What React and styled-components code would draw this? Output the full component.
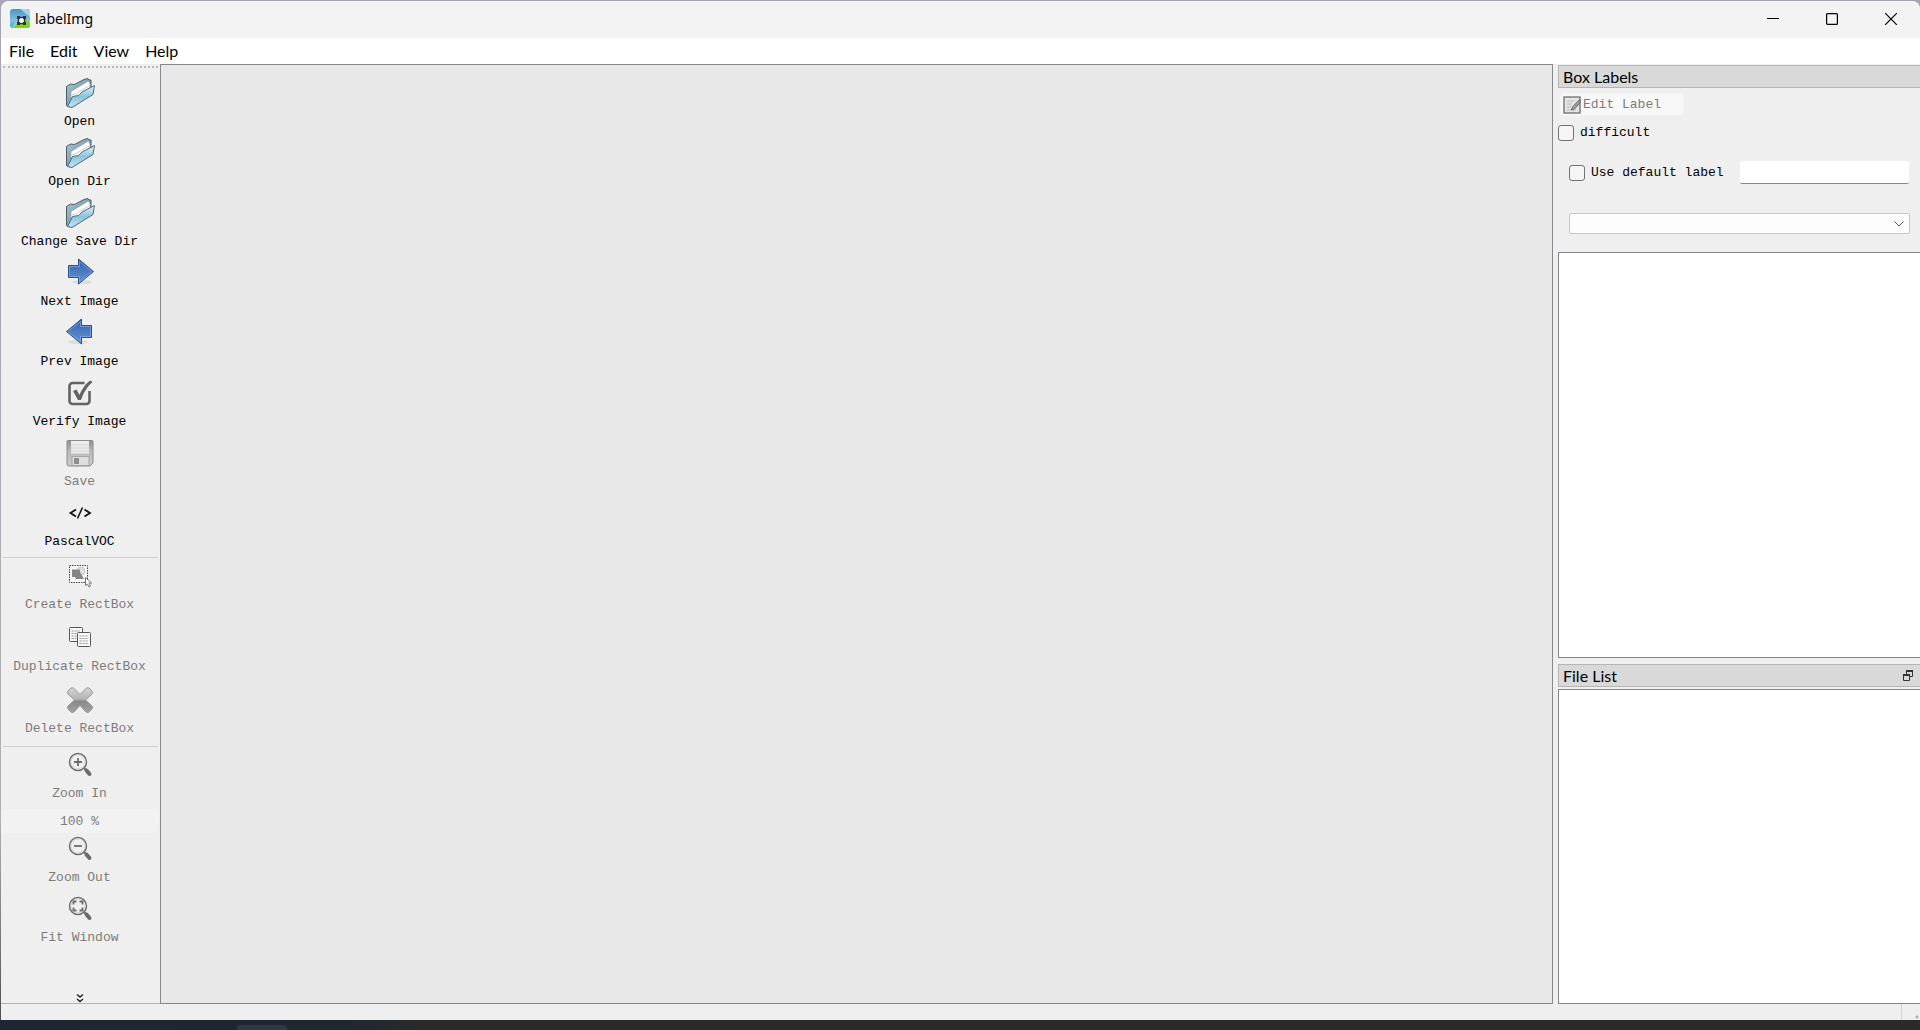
import React, { useState } from "react";
import styled, { createGlobalStyle } from "styled-components";

const GlobalStyle = createGlobalStyle`
	* {
		box-sizing: border-box;
	}
	body {
		margin: 0;
		background: #1f2730;
	}
	button, input, select {
		font: inherit;
		color: inherit;
		margin: 0;
	}
`;

const MONO = `"Liberation Mono", "Noto Sans CJK SC", monospace`;

const AppIcon = () => (
	<svg width="20" height="20" viewBox="0 0 20 20">
		<defs>
			<linearGradient id="sky" x1="0" y1="0" x2="0" y2="1">
				<stop offset="0" stopColor="#4a94c8" />
				<stop offset="1" stopColor="#a9dcf0" />
			</linearGradient>
		</defs>
		<rect width="20" height="19" rx="3" fill="url(#sky)" />
		<path d="M10 0h7a3 3 0 0 1 3 3v5z" fill="#a8cfe6" />
		<path d="M3 19l6-7 4 1 3-3 4 5v2a2 2 0 0 1-2 2z" fill="#7ed321" />
		<path d="M0 14l5-2-2 7H2a2 2 0 0 1-2-2z" fill="#62b4dc" />
		<rect x="8.500" y="8.500" width="6" height="6" fill="#fff" stroke="#2d3438" strokeWidth="1.400" />
		<path d="M7 7h3v3H7zM13 7h3v3h-3zM7 13h3v3H7zM13 13h3v3h-3z" fill="#2d3438" />
	</svg>
);

const FolderIcon = () => (
	<svg width="32" height="32" viewBox="0 0 32 32">
		<defs>
			<linearGradient id="folderBack" x1="0" y1="0" x2="1" y2="1">
				<stop offset="0" stopColor="#a9c9d8" />
				<stop offset="1" stopColor="#56808f" />
			</linearGradient>
			<linearGradient id="folderFront" x1="0" y1="0" x2="0" y2="1">
				<stop offset="0" stopColor="#e4f4fa" />
				<stop offset="0.500" stopColor="#8cc3dc" />
				<stop offset="1" stopColor="#c4e6f3" />
			</linearGradient>
		</defs>
		<path d="M2.500 9.500l4-2.500 4 .5L20 2.500l4-1 1 1.500h2v8L6 30l-3.500-1.500z" fill="url(#folderBack)" stroke="#4d5c64" />
		<path d="M7 14.500L24.500 4l1.500 3v7L7 25z" fill="#fff" stroke="#9aa0a4" strokeWidth="0.700" />
		<path d="M8 18l4-1.500L25 9" stroke="#c9cdd0" fill="none" />
		<path d="M8.500 19.500l6-1 3.500-3.500L30.500 8.500 29 17.500 8 30.500 3.500 29.500z" fill="url(#folderFront)" stroke="#4e6a77" />
	</svg>
);

const ArrowIcon = ({ left }) => (
	<svg width="32" height="32" viewBox="0 2 32 32">
		<defs>
			<linearGradient id="arrowFill" x1="0" y1="0" x2="0" y2="1">
				<stop offset="0" stopColor="#2f5fa8" />
				<stop offset="1" stopColor="#6796d8" />
			</linearGradient>
		</defs>
		<g transform={left ? "matrix(-1 0 0 1 32 0)" : undefined}>
			<ellipse cx="18" cy="27" rx="10" ry="2" fill="#dcdcdc" />
			<path d="M4.500 10.500h10V4L29.500 16.500 14.500 29V22.500h-10z" fill="url(#arrowFill)" stroke="#2c4f86" />
			<path d="M5.500 11.500h10v-5L28 16.500 15.500 27V21.500h-10z" fill="none" stroke="#7fa6dc" strokeWidth="0.800" />
		</g>
	</svg>
);

const VerifyIcon = () => (
	<svg width="32" height="32" viewBox="0 0 32 32" fill="none" stroke="#636363">
		<path d="M20.500 6H8.500a3 3 0 0 0-3 3v15a3 3 0 0 0 3 3h14a3 3 0 0 0 3-3V14" strokeWidth="2.600" />
		<path d="M9 14l3.500-1.500 3 5.500C18 12 22 6 26.500 3.500l2 1.500C23 10 20 15 17 23h-3z" fill="#636363" stroke="none" />
	</svg>
);

const SaveIcon = () => (
	<svg width="32" height="32" viewBox="0 0 32 32">
		<defs>
			<linearGradient id="disk" x1="0" y1="0" x2="0" y2="1">
				<stop offset="0" stopColor="#8f8f8f" />
				<stop offset="0.400" stopColor="#b8b8b8" />
				<stop offset="1" stopColor="#cccccc" />
			</linearGradient>
		</defs>
		<path d="M4 3.500h24a1 1 0 0 1 1 1v21.500l-3 3H5a2 2 0 0 1-2-2v-22.500a1 1 0 0 1 1-1z" fill="url(#disk)" stroke="#8c8c8c" />
		<path d="M7 4h18v12.500H7z" fill="#ececec" />
		<path d="M7 8h18M7 11h18M7 14h18" stroke="#d4d4d4" />
		<path d="M8 19.500h17v9H8z" fill="#dedede" stroke="#a4a4a4" />
		<path d="M10 21h5v6h-5z" fill="#8e8e8e" />
	</svg>
);

const CodeIcon = () => (
	<svg width="32" height="32" viewBox="0 0 32 32" fill="none" stroke="#111">
		<path d="M12 12.500L6.500 16l5.500 3.500M20.500 12.500L26 16l-5.500 3.500" strokeWidth="1.800" />
		<path d="M18.500 10.500l-5 11" strokeWidth="1.500" />
	</svg>
);

const CreateIcon = () => (
	<svg width="32" height="32" viewBox="0 1 32 32">
		<path d="M5.500 6.500h18v17h-18z" fill="#f6f6f6" stroke="#444" strokeDasharray="1.500 1" />
		<circle cx="17" cy="12" r="4" fill="#dedede" stroke="#c8c8c8" />
		<path d="M8 10.500h8v2.500l4 7H12l-1-2H8z" fill="#858585" />
		<path d="M21.500 18.500v8l2-1.500 1.500 3 1.500-1-1.500-3h2.500z" fill="#fff" stroke="#777" />
	</svg>
);

const DuplicateIcon = () => (
	<svg width="32" height="32" viewBox="0 1 32 32" fill="#f7f7f7" stroke="#565656">
		<rect x="5.500" y="6.500" width="13" height="14" rx="1" />
		<path d="M7.500 10h9M7.500 12.500h9M7.500 15h9M7.500 17.500h9" stroke="#999" strokeDasharray="2 1" />
		<rect x="13.500" y="11.500" width="13" height="14" rx="1" />
		<path d="M15.500 15h9M15.500 17.500h9M15.500 20h9M15.500 22.500h9" stroke="#999" strokeDasharray="2 1" />
	</svg>
);

const DeleteIcon = () => (
	<svg width="32" height="32" viewBox="0 0 32 32">
		<defs>
			<linearGradient id="cross" x1="0" y1="0" x2="0" y2="1">
				<stop offset="0" stopColor="#d6d6d6" />
				<stop offset="0.450" stopColor="#b4b4b4" />
				<stop offset="0.550" stopColor="#888" />
				<stop offset="1" stopColor="#a4a4a4" />
			</linearGradient>
		</defs>
		<path
			d="M4 7l3-3q1.500-.8 3 .5l6 6 6-6q1.500-1.300 3-.5l3 3q1.200 1.500 0 3l-6.500 6 6.500 6q1.200 1.500 0 3l-3 3q-1.500 1-3 0l-6-6.500-6 6.500q-1.500 1-3 0l-3-3q-1.200-1.500 0-3l6.500-6-6.500-6q-1.200-1.500 0-3z"
			fill="url(#cross)"
			stroke="#969696"
		/>
	</svg>
);

const MagnifierIcon = ({ children }) => (
	<svg width="32" height="32" viewBox="0 1 32 32" fill="none" stroke="#6c6c6c">
		<path d="M20 20l3 3" strokeWidth="2" />
		<path d="M22.500 22.500l3 3.500" strokeWidth="4" strokeLinecap="round" stroke="#6a6a6a" />
		<circle cx="14" cy="14" r="8.500" fill="#f0f0f0" strokeWidth="1.500" />
		<circle cx="14" cy="14" r="7" stroke="#d6d6d6" />
		<g strokeWidth="1.800">{children}</g>
	</svg>
);

const EditIcon = () => (
	<svg width="18" height="18" viewBox="0 0 18 18">
		<rect x="1" y="1" width="16" height="16" fill="#e4e4e4" stroke="#7d7d7d" strokeWidth="1.500" />
		<path d="M4 5h7M4 8h5M4 11h4M4 14h9" stroke="#bababa" />
		<path d="M16.500 3.500l-7 7.500-1 3 3-1 6-7z" fill="#a0a0a0" stroke="#666" />
	</svg>
);

const fileTools = [
	{ label: "Open", icon: <FolderIcon /> },
	{ label: "Open Dir", icon: <FolderIcon /> },
	{ label: "Change Save Dir", icon: <FolderIcon /> },
	{ label: "Next Image", icon: <ArrowIcon /> },
	{ label: "Prev Image", icon: <ArrowIcon left /> },
	{ label: "Verify Image", icon: <VerifyIcon /> },
	{ label: "Save", icon: <SaveIcon />, disabled: true },
	{ label: "PascalVOC", icon: <CodeIcon /> },
];

const boxTools = [
	{ label: "Create RectBox", icon: <CreateIcon /> },
	{ label: "Duplicate RectBox", icon: <DuplicateIcon /> },
	{ label: "Delete RectBox", icon: <DeleteIcon /> },
];

const App = () => {
	const [difficult, setDifficult] = useState(false);
	const [useDefault, setUseDefault] = useState(false);
	const [defaultLabel, setDefaultLabel] = useState("");

	return (
		<Screen>
			<GlobalStyle />
			<Window>
				<TitleBar>
					<AppIcon />
					<Title>labelImg</Title>
					<WindowButton aria-label="Minimize">
						<svg width="12" height="12" viewBox="0 0 12 12" stroke="#000">
							<path d="M0 5.500h12" />
						</svg>
					</WindowButton>
					<WindowButton aria-label="Maximize">
						<svg width="12" height="12" viewBox="0 0 12 12" stroke="#000" fill="none">
							<rect x="0.600" y="0.600" width="10.800" height="10.800" rx="1" strokeWidth="1.200" />
						</svg>
					</WindowButton>
					<WindowButton aria-label="Close">
						<svg width="12" height="12" viewBox="0 0 12 12" stroke="#000">
							<path d="M0 0l12 12M12 0L0 12" strokeWidth="1.200" />
						</svg>
					</WindowButton>
				</TitleBar>

				<MenuBar>
					{["File", "Edit", "View", "Help"].map((item) => (
						<MenuItem key={item}>{item}</MenuItem>
					))}
				</MenuBar>

				<Main>
					<ToolBar>
						<Handle />
						{fileTools.map((tool) => (
							<ToolButton key={tool.label} disabled={tool.disabled}>
								{tool.icon}
								{tool.label}
							</ToolButton>
						))}
						<Separator />
						{boxTools.map((tool) => (
							<ToolButton key={tool.label} $tall disabled>
								{tool.icon}
								{tool.label}
							</ToolButton>
						))}
						<Separator />
						<ToolButton disabled>
							<MagnifierIcon>
								<path d="M10 14h8M14 10v8" />
							</MagnifierIcon>
							Zoom In
						</ToolButton>
						<ZoomValue aria-label="Zoom level" defaultValue="100 %" disabled />
						<ToolButton disabled>
							<MagnifierIcon>
								<path d="M10 14h8" />
							</MagnifierIcon>
							Zoom Out
						</ToolButton>
						<ToolButton disabled>
							<MagnifierIcon>
								<path d="M9.500 12.500v-3h3M15.500 9.500h3v3M18.500 15.500v3h-3M12.500 18.500h-3v-3" />
							</MagnifierIcon>
							Fit Window
						</ToolButton>
						<MoreButton aria-label="More tools">
							<svg width="8" height="9" viewBox="0 0 8 9" stroke="#222" fill="none">
								<path d="M1 .5l3 2.500 3-2.500M1 5l3 2.500L7 5" strokeWidth="1.400" />
							</svg>
						</MoreButton>
					</ToolBar>

					<Canvas />

					<Docks>
						<DockTitle>Box Labels</DockTitle>
						<EditButton disabled>
							<EditIcon />
							Edit Label
						</EditButton>
						<CheckLabel>
							<CheckBox checked={difficult} onChange={(e) => setDifficult(e.target.checked)} />
							difficult
						</CheckLabel>
						<DefaultRow>
							<CheckLabel>
								<CheckBox checked={useDefault} onChange={(e) => setUseDefault(e.target.checked)} />
								Use default label
							</CheckLabel>
							<TextBox
								aria-label="Default label"
								value={defaultLabel}
								onChange={(e) => setDefaultLabel(e.target.value)}
							/>
						</DefaultRow>
						<Combo>
							<ComboSelect aria-label="Label filter">
								<option></option>
							</ComboSelect>
							<ComboArrow width="10" height="6" viewBox="0 0 10 6" fill="none" stroke="#555">
								<path d="M.5.5L5 5 9.500.5" />
							</ComboArrow>
						</Combo>
						<ListBox $grow={406} />
						<DockTitle $second>
							File List
							<FloatButton aria-label="Float">
								<svg width="10" height="11" viewBox="0 0 10 11" fill="#d9d9d9" stroke="#333">
									<path d="M3.500 1.500h6v5h-6z" />
									<path d="M3 1h7" strokeWidth="2" />
									<path d="M.5 5.500h6v5h-6z" />
									<path d="M0 5h7" strokeWidth="2" />
								</svg>
							</FloatButton>
						</DockTitle>
						<ListBox $grow={314} />
					</Docks>
				</Main>

				<StatusBar>
					<Grip />
				</StatusBar>
			</Window>
			<TaskBar>
				<TaskItem />
			</TaskBar>
		</Screen>
	);
};

const Screen = styled.div`
	display: flex;
	flex-direction: column;
	min-height: 100vh;
	padding: 1px 0 0 1px;
	background: linear-gradient(#a4a5b3, #b0b0b4 80%, #4a4a50);
`;

const Window = styled.div`
	display: flex;
	flex: 1;
	flex-direction: column;
	overflow: hidden;
	border-radius: 8px 8px 0 0;
	background: #efefef;
	color: #000;
`;

const TitleBar = styled.header`
	display: flex;
	align-items: center;
	height: 37px;
	padding: 0 0 2px 9px;
	background: #f3f3f3;
`;

const Title = styled.span`
	flex: 1;
	padding-left: 5px;
	font: 14px/20px "Noto Sans", sans-serif;
`;

const WindowButton = styled.button`
	display: flex;
	align-items: center;
	justify-content: center;
	width: 59px;
	height: 35px;
	padding: 0;
	border: 0;
	background: none;
`;

const MenuBar = styled.nav`
	display: flex;
	height: 26px;
	background: #fff;
	font: 16px/26px Lato, sans-serif;
`;

const MenuItem = styled.button`
	padding: 0 8px;
	border: 0;
	background: none;
`;

const Main = styled.div`
	display: flex;
	flex: 1;
`;

const ToolBar = styled.div`
	display: flex;
	flex-direction: column;
	width: 159px;
	padding-right: 2px;
	border-bottom: 1px solid #b4b4b4;
	font: 13px/16px ${MONO};
`;

const Handle = styled.div`
	margin: 2px 0 9px 2px;
	border-top: 2px dotted #b8b8b8;
`;

const ToolButton = styled.button`
	display: flex;
	flex-direction: column;
	align-items: center;
	gap: 5px;
	height: ${(props) => (props.$tall ? "62px" : "60px")};
	padding: 0;
	border: 0;
	background: none;
	white-space: nowrap;

	&:disabled {
		color: #7c7c7c;
	}
`;

const Separator = styled.div`
	height: 1px;
	margin: 0 0 2px 2px;
	background: #cfcfcf;
`;

const ZoomValue = styled.input`
	width: 100%;
	height: 24px;
	padding: 0;
	border: 1px solid #f3f3f3;
	border-radius: 4px;
	background: #f2f2f2;
	color: #7c7c7c;
	text-align: center;
`;

const MoreButton = styled.button`
	display: flex;
	align-items: flex-end;
	justify-content: center;
	height: 12px;
	margin-top: auto;
	padding: 0;
	border: 0;
	background: none;
`;

const Canvas = styled.main`
	flex: 1;
	border: 1px solid #87898c;
	background: #e8e8e8;
`;

const Docks = styled.aside`
	display: flex;
	flex-direction: column;
	width: 367px;
	padding: 1px 0 0 5px;
	font: 13px/16px ${MONO};
`;

const DockTitle = styled.h2`
	display: flex;
	align-items: center;
	justify-content: space-between;
	height: 23px;
	margin: ${(props) => (props.$second ? "6px 0 2px" : "0")};
	padding: 0 7px 0 4px;
	border: 1px solid #b5b5b5;
	border-right: 0;
	background: #d9d9d9;
	font: 16px/20px Lato, sans-serif;
`;

const FloatButton = styled.button`
	display: flex;
	padding: 0;
	border: 0;
	background: none;
`;

const EditButton = styled.button`
	display: flex;
	align-items: center;
	gap: 2px;
	align-self: flex-start;
	width: 124px;
	height: 23px;
	margin: 5px 0 8px 2px;
	padding: 0 2px;
	border: 1px solid #f4f4f4;
	border-radius: 4px;
	background: #f8f8f8;
	color: #7c7c7c;
`;

const CheckLabel = styled.label`
	display: flex;
	align-items: center;
	gap: 6px;
	height: 18px;
	white-space: nowrap;
`;

const CheckBox = styled.input.attrs({ type: "checkbox" })`
	appearance: none;
	width: 16px;
	height: 16px;
	border: 1px solid #727272;
	border-radius: 3px;
	background: #f5f5f5;

	&:checked {
		background: #0067c0;
	}
`;

const DefaultRow = styled.div`
	display: flex;
	align-items: center;
	gap: 16px;
	margin: 19px 11px 0;
`;

const TextBox = styled.input`
	flex: 1;
	min-width: 0;
	height: 23px;
	padding: 0 4px;
	border: 0;
	border-bottom: 1px solid #868686;
	border-radius: 2px;
	background: #fff;
`;

const Combo = styled.div`
	position: relative;
	margin: 29px 10px 18px 11px;
`;

const ComboSelect = styled.select`
	display: block;
	appearance: none;
	width: 100%;
	height: 21px;
	padding: 0 4px;
	border: 1px solid #c8c8c8;
	border-radius: 2px;
	background: #fdfdfd;
`;

const ComboArrow = styled.svg`
	position: absolute;
	top: 8px;
	right: 6px;
	pointer-events: none;
`;

const ListBox = styled.div`
	flex: ${(props) => props.$grow} 0 0;
	border: 1px solid #828488;
	border-right: 0;
	background: #fff;
`;

const StatusBar = styled.footer`
	display: flex;
	justify-content: flex-end;
	height: 16px;
	background: #efefef;
`;

const Grip = styled.div`
	width: 19px;
	border-left: 1px solid #d4d4d4;
	background: radial-gradient(circle at 15px 13px, #b0b0b0 1px, transparent 2px);
`;

const TaskBar = styled.div`
	display: flex;
	align-items: flex-end;
	height: 10px;
	margin-left: -1px;
	background: linear-gradient(90deg, #1d2733, #1f2730 18%, #2a2a2a 22%);
`;

const TaskItem = styled.div`
	width: 50px;
	height: 5px;
	margin-left: 237px;
	border-radius: 4px 4px 0 0;
	background: #303845;
`;

export default App;
